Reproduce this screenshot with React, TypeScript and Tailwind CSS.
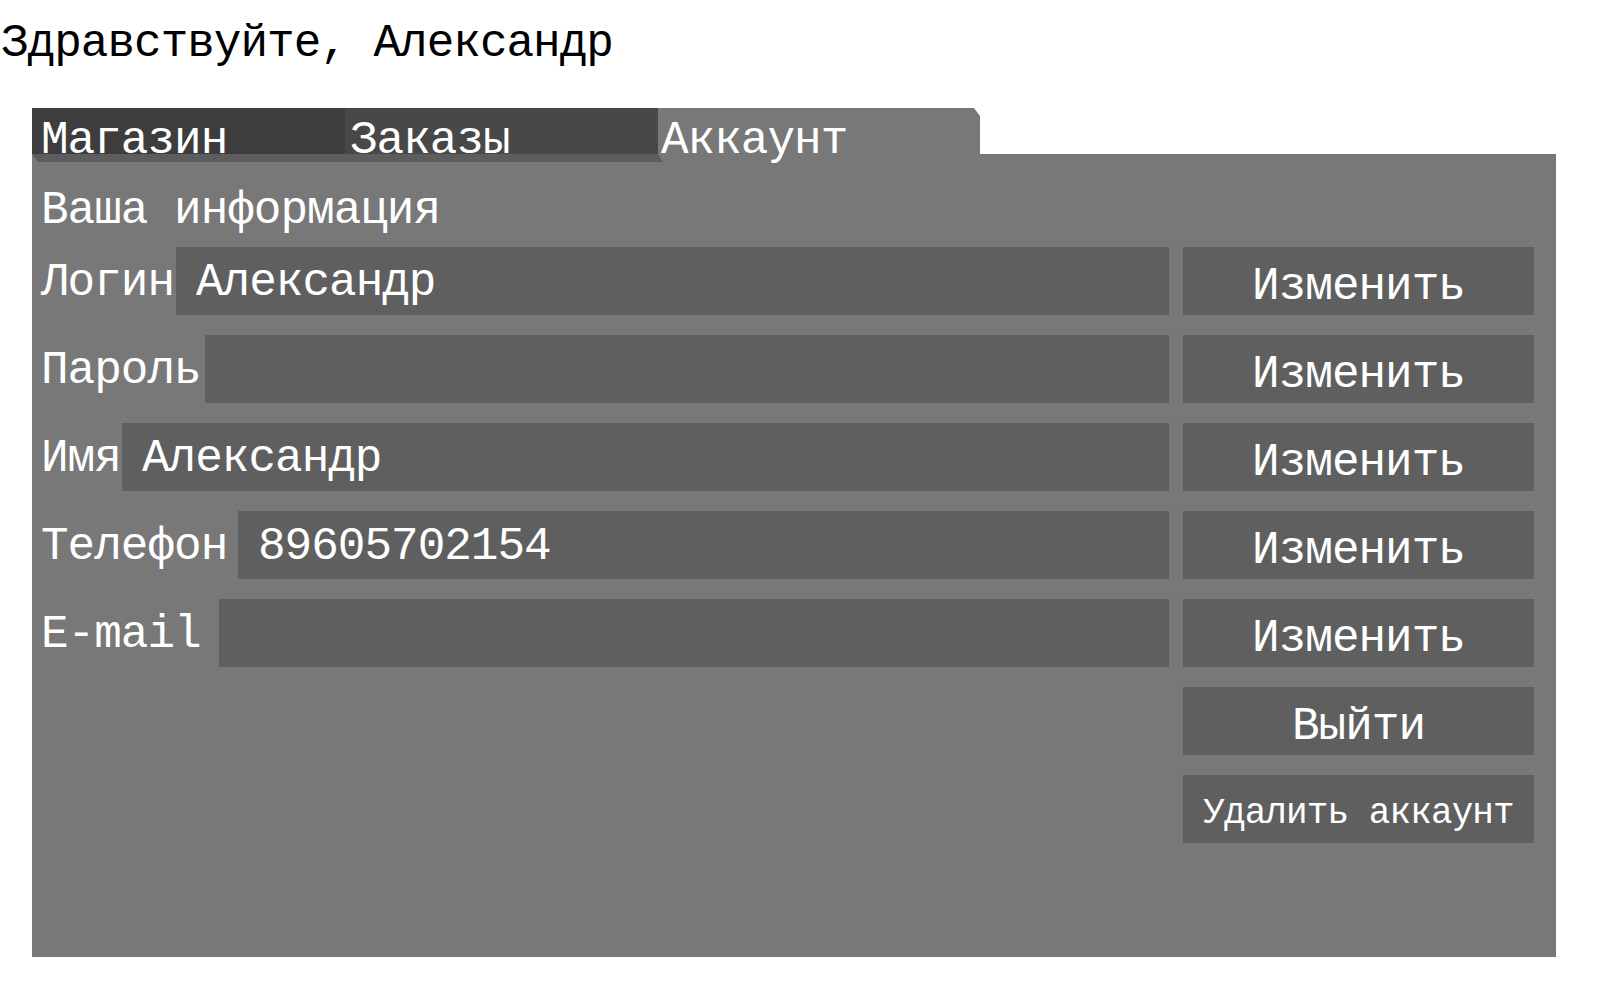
const FIELDS = [
  { label: 'Логин', value: 'Александр', labelW: 'w-[135px]' },
  { label: 'Пароль', value: '', labelW: 'w-[164px]' },
  { label: 'Имя', value: 'Александр', labelW: 'w-[81px]' },
  { label: 'Телефон', value: '89605702154', labelW: 'w-[197px]' },
  { label: 'E-mail', value: '', labelW: 'w-[178px]' },
]

export default function App() {
  return (
    <div className="min-h-screen bg-white font-['Liberation_Mono',monospace] text-[46px] leading-[46px] tracking-[-1px]">
      {/* Greeting */}
      <div className="h-[108px] pt-[21px] pl-[1px] text-black">Здравствуйте, Александр</div>

      <div className="ml-[32px] w-[1524px]">
        {/* Tabs */}
        <div className="relative z-10 flex h-[46px] text-white">
          <div className="h-[46px] w-[313px] bg-[#3d3d3d] pl-[9px] pt-[10px]">Магазин</div>
          <div className="h-[46px] w-[313px] bg-[#484848] pl-[5px] pt-[10px]">Заказы</div>
          <div className="h-[46px] w-[322px] bg-[#787878] pl-[3px] pt-[10px] [clip-path:polygon(0_0,calc(100%-6px)_0,100%_8px,100%_200%,0_200%)]">
            Аккаунт
          </div>
        </div>

        {/* Panel */}
        <div className="relative h-[803px] bg-[#787878] pl-[9px] pr-[22px] pt-[34px] text-white">
          <div className="absolute left-0 top-0 h-[8px] w-[631px] bg-[#5d5d5d] [clip-path:polygon(0_0,calc(100%-5px)_0,100%_100%,6px_100%)]" />

          <div className="mb-[13px]">Ваша информация</div>

          <div className="flex flex-col gap-[20px]">
            {FIELDS.map((f) => (
              <div key={f.label} className="flex h-[68px] gap-[14px]">
                <div className="flex flex-1">
                  <div className={`${f.labelW} shrink-0 pt-[13px]`}>{f.label}</div>
                  <div className="flex-1 bg-[#5f5f5f] pl-[20px] pt-[13px]">{f.value}</div>
                </div>
                <button className="h-[68px] w-[351px] bg-[#5f5f5f] pt-[11px] text-center">Изменить</button>
              </div>
            ))}

            <div className="flex h-[68px] justify-end">
              <button className="h-[68px] w-[351px] bg-[#5f5f5f] pt-[12px] text-center">Выйти</button>
            </div>
            <div className="flex h-[68px] justify-end">
              <button className="h-[68px] w-[351px] bg-[#5f5f5f] pt-[9px] text-center text-[36px] leading-[36px] tracking-[-0.9px]">
                Удалить аккаунт
              </button>
            </div>
          </div>
        </div>
      </div>
    </div>
  )
}
